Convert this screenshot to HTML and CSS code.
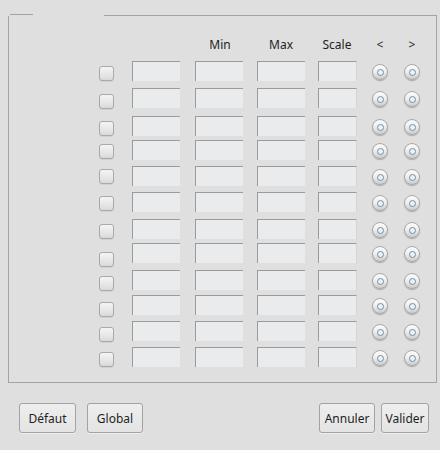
FILE: index.html
```html
<!DOCTYPE html>
<html>
<head>
<meta charset="utf-8">
<link rel="stylesheet" href="styles.css">
</head>
<body>
<div class="window">
  <div class="group-top">
    <div class="seg-l"></div>
    <div class="seg-gap"></div>
    <div class="seg-r"></div>
  </div>
  <div class="group-body">
    <div class="grid head">
      <span class="h h-field h-min">Min</span>
      <span class="h h-field">Max</span>
      <span class="h h-scale">Scale</span>
      <span class="h h-radio">&lt;</span>
      <span class="h h-radio">&gt;</span>
    </div>
    <div class="rows">
      <div class="grid row"><span class="cb"></span><span class="field"></span><span class="field"></span><span class="field"></span><span class="field scale"></span><span class="radio"></span><span class="radio r2"></span></div>
      <div class="grid row"><span class="cb"></span><span class="field"></span><span class="field"></span><span class="field"></span><span class="field scale"></span><span class="radio"></span><span class="radio r2"></span></div>
      <div class="grid row"><span class="cb"></span><span class="field"></span><span class="field"></span><span class="field"></span><span class="field scale"></span><span class="radio"></span><span class="radio r2"></span></div>
      <div class="grid row"><span class="cb"></span><span class="field"></span><span class="field"></span><span class="field"></span><span class="field scale"></span><span class="radio"></span><span class="radio r2"></span></div>
      <div class="grid row"><span class="cb"></span><span class="field"></span><span class="field"></span><span class="field"></span><span class="field scale"></span><span class="radio"></span><span class="radio r2"></span></div>
      <div class="grid row"><span class="cb"></span><span class="field"></span><span class="field"></span><span class="field"></span><span class="field scale"></span><span class="radio"></span><span class="radio r2"></span></div>
      <div class="grid row"><span class="cb"></span><span class="field"></span><span class="field"></span><span class="field"></span><span class="field scale"></span><span class="radio"></span><span class="radio r2"></span></div>
      <div class="grid row"><span class="cb"></span><span class="field"></span><span class="field"></span><span class="field"></span><span class="field scale"></span><span class="radio"></span><span class="radio r2"></span></div>
      <div class="grid row"><span class="cb"></span><span class="field"></span><span class="field"></span><span class="field"></span><span class="field scale"></span><span class="radio"></span><span class="radio r2"></span></div>
      <div class="grid row"><span class="cb"></span><span class="field"></span><span class="field"></span><span class="field"></span><span class="field scale"></span><span class="radio"></span><span class="radio r2"></span></div>
      <div class="grid row"><span class="cb"></span><span class="field"></span><span class="field"></span><span class="field"></span><span class="field scale"></span><span class="radio"></span><span class="radio r2"></span></div>
      <div class="grid row"><span class="cb"></span><span class="field"></span><span class="field"></span><span class="field"></span><span class="field scale"></span><span class="radio"></span><span class="radio r2"></span></div>
    </div>
  </div>
  <div class="buttons">
    <div class="btn-group">
      <button class="btn b-defaut">Défaut</button>
      <button class="btn b-global">Global</button>
    </div>
    <div class="btn-group right">
      <button class="btn b-annuler">Annuler</button>
      <button class="btn b-valider">Valider</button>
    </div>
  </div>
</div>
</body>
</html>
```

FILE: styles.css
```css
html, body {
  margin: 0;
  padding: 0;
  background: #dfdfdf;
}
body {
  width: 440px;
  height: 450px;
  overflow: hidden;
  font-family: "Noto Sans", "DejaVu Sans", sans-serif;
  font-size: 12px;
  color: #1e1e1e;
}
.window {
  padding-top: 14px;
}
.group-top {
  display: flex;
  height: 2px;
  margin-left: 10px;
  margin-right: 3px;
}
.seg-l {
  width: 23px;
  border-top: 1px solid #a4a4a4;
}
.seg-gap {
  width: 71px;
}
.seg-r {
  flex: 1;
  margin-top: 1px;
  border-top: 1px solid #a4a4a4;
}
.group-body {
  margin-left: 8px;
  margin-right: 3px;
  border-left: 1px solid #a4a4a4;
  border-right: 1px solid #a4a4a4;
  border-bottom: 1px solid #a4a4a4;
  padding-top: 21px;
  box-sizing: border-box;
  height: 367px;
}
.grid {
  display: grid;
  grid-template-columns: 90px 33px 63px 62px 61px 50px 32px 32px;
  align-items: start;
}
.head {
  height: 16px;
  line-height: 16px;
  margin-bottom: 8px;
}
.h {
  text-align: center;
  color: #1e1e1e;
}
.h-min { grid-column: 4; margin-left: 1px; }
.h-field { width: 48px; }
.h-scale { width: 38px; }
.h-radio { width: 16px; margin-left: 4px; }
.row {
  height: 26px;
}
.row:nth-child(1) { height: 27px; }
.row:nth-child(2) { height: 28px; }
.row:nth-child(3) { height: 24px; }
.row:nth-child(4) { height: 26px; }
.row:nth-child(5) { height: 26px; }
.row:nth-child(6) { height: 27px; }
.row:nth-child(7) { height: 24px; }
.row:nth-child(8) { height: 27px; }
.row:nth-child(9) { height: 25px; }
.row:nth-child(10) { height: 26px; }
.row:nth-child(11) { height: 26px; }
.row:nth-child(12) { height: 20px; }

.cb {
  grid-column: 2;
  display: block;
  width: 13px;
  height: 13px;
  margin-top: 5px;
  border: 1px solid #a9a9a9;
  border-radius: 3px;
  background: linear-gradient(#f4f4f4, #e6e6e6 60%, #d9d9d9);
  box-shadow: 0 1px 0 rgba(0,0,0,0.06);
}
.row:nth-child(2) .cb { margin-top: 6px; }
.row:nth-child(3) .cb { margin-top: 5px; }
.row:nth-child(4) .cb { margin-top: 4px; }
.row:nth-child(5) .cb { margin-top: 3px; }
.row:nth-child(6) .cb { margin-top: 4px; }
.row:nth-child(7) .cb { margin-top: 5px; }
.row:nth-child(8) .cb { margin-top: 9px; }
.row:nth-child(9) .cb { margin-top: 6px; }
.row:nth-child(10) .cb { margin-top: 7px; }
.row:nth-child(11) .cb { margin-top: 6px; }
.row:nth-child(12) .cb { margin-top: 5px; }

.field {
  display: block;
  width: 48px;
  height: 20px;
  box-sizing: border-box;
  border-top: 1px solid #9b9b9b;
  border-left: 1px solid #9b9b9b;
  background: #eaebec;
}
.field.scale {
  width: 39px;
  border-right: 1px solid #cfd6dc;
}
.radio {
  display: block;
  position: relative;
  width: 16px;
  height: 16px;
  margin-top: 3px;
  margin-left: 4px;
  box-sizing: border-box;
  border-radius: 50%;
  border: 1px solid #a9a9a9;
  background: linear-gradient(#fbfbfb 0, #f0f0f0 45%, #cdcdcd 100%);
  box-shadow: 0 1px 1px rgba(0,0,0,0.25);
}
.radio::after {
  content: "";
  position: absolute;
  left: 3.5px;
  top: 3.5px;
  width: 5px;
  height: 5px;
  border-radius: 50%;
  border: 1px solid #6f8ea8;
  background: #eef1f4;
}
.buttons {
  display: flex;
  justify-content: space-between;
  margin-top: 20px;
  padding-left: 19px;
  padding-right: 11px;
}
.btn-group {
  display: flex;
  gap: 11px;
}
.btn-group.right {
  gap: 6px;
}
.btn {
  height: 30px;
  padding: 0;
  border: 1px solid #a3a3a3;
  border-radius: 3px;
  background: linear-gradient(#eeeeee, #e4e4e4);
  font-family: "Noto Sans", "DejaVu Sans", sans-serif;
  font-size: 12px;
  color: #1e1e1e;
  box-shadow: 0 1px 0 rgba(255,255,255,0.5);
}
.b-defaut { width: 57px; }
.b-global { width: 56px; }
.b-annuler { width: 56px; }
.b-valider { width: 48px; }
```
